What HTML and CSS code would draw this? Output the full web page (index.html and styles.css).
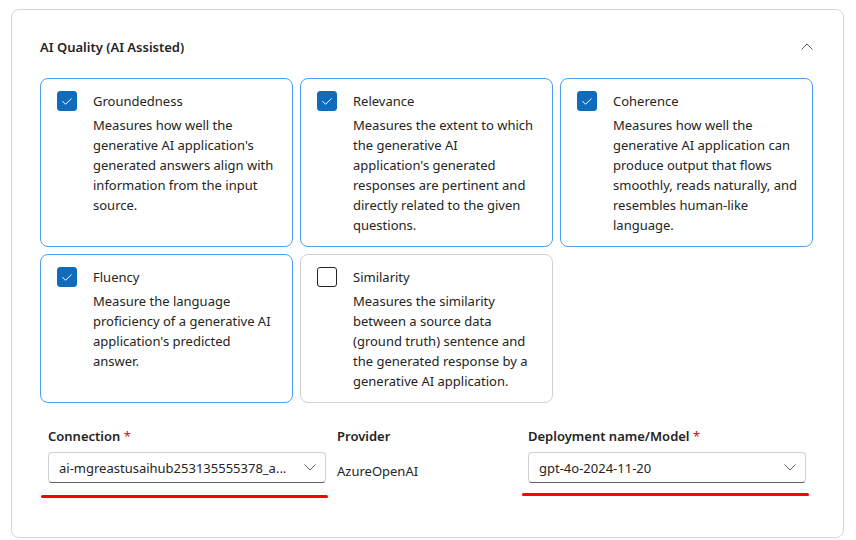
FILE: index.html
```html
<!DOCTYPE html>
<html lang="en">
<head>
<meta charset="utf-8">
<title>AI Quality</title>
<link rel="stylesheet" href="styles.css">
</head>
<body>
<section class="panel">
  <header class="panel-head">
    <h2 class="panel-title">AI Quality (AI Assisted)</h2>
    <svg class="chev-up" width="12" height="7" viewBox="0 0 12 7"><path d="M0.5 6.5 L6 1 L11.5 6.5" fill="none" stroke="#616161" stroke-width="1"/></svg>
  </header>

  <div class="cards">
    <div class="card selected">
      <span class="check on"><svg width="20" height="20" viewBox="0 0 20 20"><path d="M5.5 10.2 L8.6 13.3 L14.5 7.4" fill="none" stroke="#fff" stroke-width="1"/></svg></span>
      <div class="card-body">
        <div class="card-title">Groundedness</div>
        <p class="card-desc">Measures how well the<br>generative AI application's<br>generated answers align with<br>information from the input<br>source.</p>
      </div>
    </div>
    <div class="card selected">
      <span class="check on"><svg width="20" height="20" viewBox="0 0 20 20"><path d="M5.5 10.2 L8.6 13.3 L14.5 7.4" fill="none" stroke="#fff" stroke-width="1"/></svg></span>
      <div class="card-body">
        <div class="card-title">Relevance</div>
        <p class="card-desc">Measures the extent to which<br>the generative AI<br>application's generated<br>responses are pertinent and<br>directly related to the given<br>questions.</p>
      </div>
    </div>
    <div class="card selected">
      <span class="check on"><svg width="20" height="20" viewBox="0 0 20 20"><path d="M5.5 10.2 L8.6 13.3 L14.5 7.4" fill="none" stroke="#fff" stroke-width="1"/></svg></span>
      <div class="card-body">
        <div class="card-title">Coherence</div>
        <p class="card-desc">Measures how well the<br>generative AI application can<br>produce output that flows<br>smoothly, reads naturally, and<br>resembles human-like<br>language.</p>
      </div>
    </div>
    <div class="card selected">
      <span class="check on"><svg width="20" height="20" viewBox="0 0 20 20"><path d="M5.5 10.2 L8.6 13.3 L14.5 7.4" fill="none" stroke="#fff" stroke-width="1"/></svg></span>
      <div class="card-body">
        <div class="card-title">Fluency</div>
        <p class="card-desc">Measure the language<br>proficiency of a generative AI<br>application's predicted<br>answer.</p>
      </div>
    </div>
    <div class="card">
      <span class="check"></span>
      <div class="card-body">
        <div class="card-title">Similarity</div>
        <p class="card-desc">Measures the similarity<br>between a source data<br>(ground truth) sentence and<br>the generated response by a<br>generative AI application.</p>
      </div>
    </div>
  </div>

  <div class="form">
    <div class="field marked mark-a">
      <label class="label">Connection <span class="req">*</span></label>
      <div class="select">
        <span class="select-text">ai-mgreastusaihub253135555378_a...</span>
        <svg class="chev-down" width="12" height="7" viewBox="0 0 12 7"><path d="M0.5 0.5 L6 6 L11.5 0.5" fill="none" stroke="#616161" stroke-width="1"/></svg>
      </div>
    </div>
    <div class="field">
      <label class="label">Provider</label>
      <div class="value">AzureOpenAI</div>
    </div>
    <div class="field marked mark-b">
      <label class="label">Deployment name/Model <span class="req">*</span></label>
      <div class="select">
        <span class="select-text">gpt-4o-2024-11-20</span>
        <svg class="chev-down" width="12" height="7" viewBox="0 0 12 7"><path d="M0.5 0.5 L6 6 L11.5 0.5" fill="none" stroke="#616161" stroke-width="1"/></svg>
      </div>
    </div>
  </div>
</section>
</body>
</html>
```

FILE: styles.css
```css
* { box-sizing: border-box; }
html, body { margin: 0; padding: 0; background: #fff; }
body {
  font-family: "Noto Sans", "Open Sans", sans-serif;
  font-size: 13px;
  line-height: 20px;
  color: #242424;
}
.panel {
  margin: 9px 0 0 11px;
  width: 833px;
  height: 529px;
  border: 1px solid #d6d6d6;
  border-radius: 8px;
  padding: 27px 30px 0 28px;
}
.panel-head {
  display: flex;
  align-items: center;
  justify-content: space-between;
  height: 20px;
}
.panel-title {
  margin: 0;
  font-size: 13px;
  font-weight: 600;
  line-height: 20px;
}
.chev-up { display: block; margin-right: 0; margin-top: -2px; }

.cards {
  margin-top: 21px;
  display: grid;
  grid-template-columns: repeat(3, minmax(0, 1fr));
  column-gap: 7px;
  row-gap: 7px;
}
.card {
  min-width: 0;
  display: flex;
  gap: 16px;
  border: 1px solid #d1d1d1;
  border-radius: 8px;
  padding: 12px 16px 11px 16px;
}
.card.selected { border-color: #4ca0f1; }
.check {
  flex: none;
  width: 20px;
  height: 20px;
  border: 1px solid #242424;
  border-radius: 3px;
  display: block;
}
.check.on {
  background: #0f6cbd;
  border-color: #0f6cbd;
}
.check svg { display: block; margin: -1px; }
.card-body { min-width: 0; }
.card-title { line-height: 20px; }
.card-desc { margin: 4px 0 0; white-space: nowrap; }

.form {
  margin-top: 23px;
  padding-left: 8px;
  display: grid;
  grid-template-columns: 278px 180px 278px;
  column-gap: 11px;
}
.field { position: relative; }
.label {
  display: block;
  font-weight: 600;
  line-height: 20px;
  margin-bottom: 6px;
}
.req { color: #c50f1f; font-weight: 400; }
.select {
  height: 31px;
  border: 1px solid #d1d1d1;
  border-bottom-color: #616161;
  border-radius: 4px;
  display: flex;
  align-items: center;
  justify-content: space-between;
  padding: 0 9px 0 10px;
}
.select-text { white-space: nowrap; overflow: hidden; }
.chev-down { display: block; }
.value { padding-top: 9px; line-height: 20px; }

.marked::after {
  content: "";
  position: absolute;
  height: 3px;
  background: #ff0000;
  border-radius: 2px;
}
.mark-a::after { left: -7px; right: -2px; top: 69px; }
.mark-b::after { left: -6px; right: -3px; top: 67px; }
```
